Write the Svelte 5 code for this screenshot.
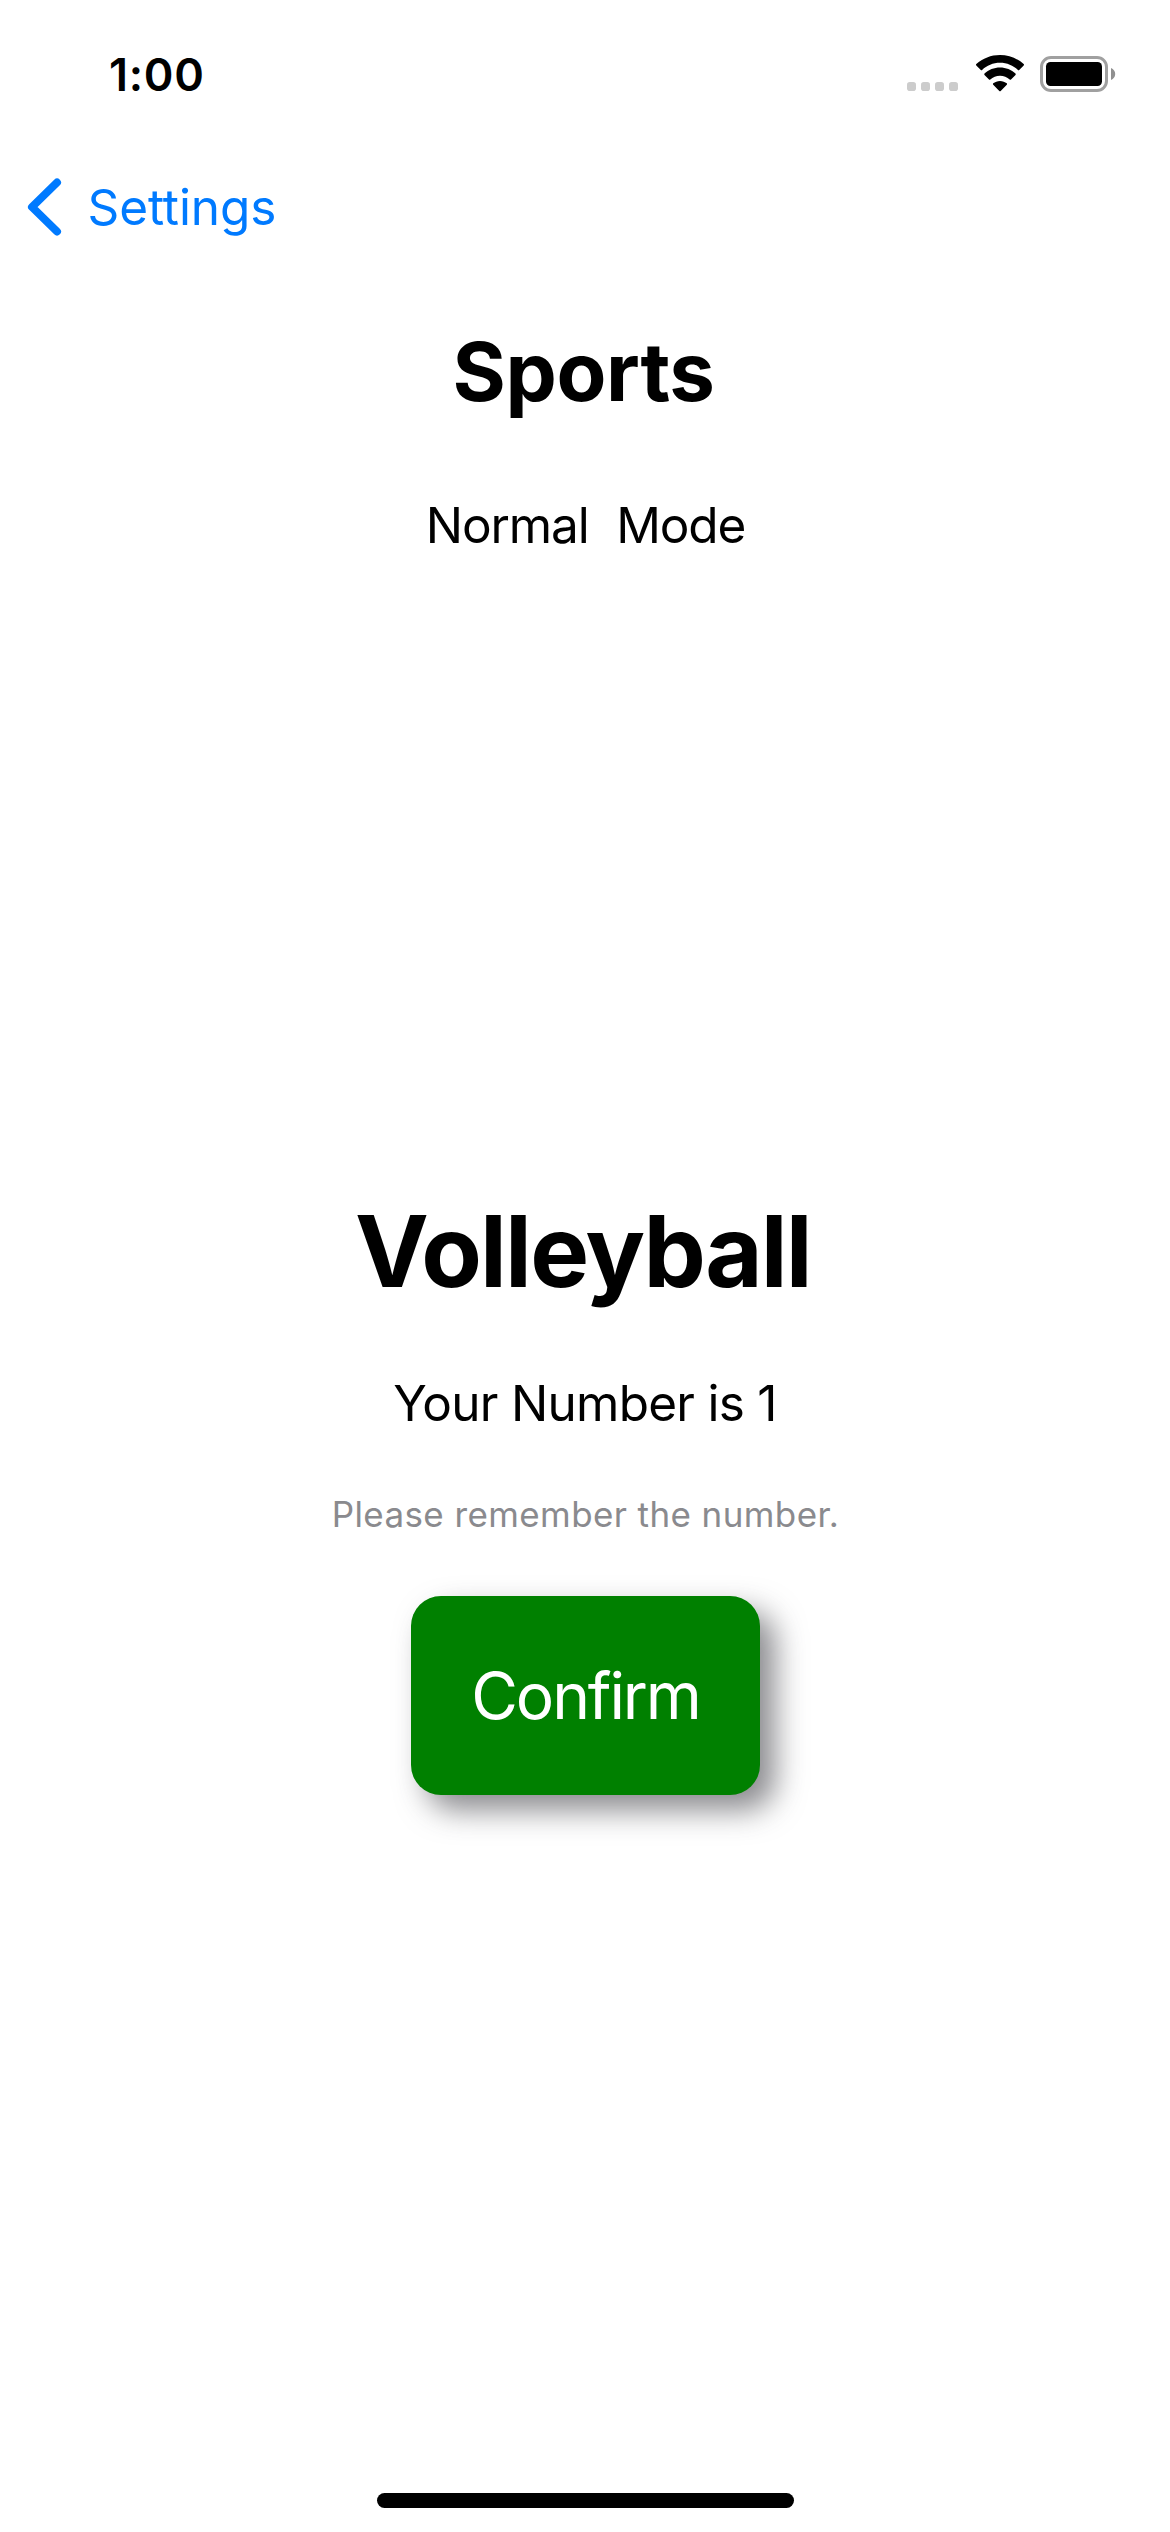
<script>
  const category = 'Sports';
  const mode = 'Normal';
  const team = 'Volleyball';
  const number = 1;
</script>

<div class="screen">
  <header class="status">
    <time>1:00</time>
    <div class="indicators">
      <svg class="cell" viewBox="0 0 51 9" aria-hidden="true">
        {#each [0, 14, 28, 42] as x}
          <rect {x} y="0" width="9" height="9" rx="2.8" />
        {/each}
      </svg>
      <svg class="wifi" viewBox="0 0 50 37" aria-hidden="true">
        <path d="M25 7.800c6.900 0 13.200 2.700 17.900 7.100.4.300.9.300 1.300 0l4.500-4.500c.4-.4.4-1 0-1.400C42.300 3.400 34 0 25 0S7.700 3.400 1.300 9c-.4.400-.4 1 0 1.400l4.500 4.500c.4.300.9.300 1.300 0C11.800 10.500 18.100 7.800 25 7.800z" />
        <path d="M25 20.800c3.700 0 7.100 1.400 9.700 3.700.4.400 1 .3 1.300 0l4.500-4.500c.4-.4.4-1 0-1.400-4.100-3.700-9.600-6-15.500-6s-11.400 2.300-15.500 6c-.4.400-.4 1 0 1.400l4.500 4.500c.3.300.9.400 1.300 0 2.600-2.300 6-3.700 9.700-3.700z" />
        <path d="M31.800 29.700c.4-.4.4-1 0-1.400-1.900-1.500-4.200-2.400-6.800-2.400s-4.900.9-6.800 2.400c-.4.400-.4 1 0 1.400l6.100 6.200c.4.400 1 .4 1.400 0z" />
      </svg>
      <svg class="battery" viewBox="0 0 75 36" aria-hidden="true">
        <rect x="1.500" y="1.500" width="65" height="33" rx="9.500" fill="none" stroke="#a0a0a0" stroke-width="3" />
        <rect x="6" y="6" width="56" height="24" rx="4.500" />
        <path d="M71 12c2.600 1.100 4.200 3.400 4.200 6s-1.600 4.900-4.200 6z" fill="#909090" />
      </svg>
    </div>
  </header>

  <nav>
    <svg class="chevron" viewBox="0 0 36 60" aria-hidden="true">
      <path d="M31 5.500 6 30 31 54.500" />
    </svg>
    <a href="#settings">Settings</a>
  </nav>

  <main>
    <h1>{category}</h1>
    <p class="mode"><span>{mode}</span><span>Mode</span></p>
    <h2>{team}</h2>
    <p class="number">Your Number is {number}</p>
    <p class="hint">Please remember the number.</p>
    <button type="button">Confirm</button>
  </main>

  <footer><div class="home"></div></footer>
</div>

<style>
  :global(body) {
    margin: 0;
    background: #fff;
  }

  .screen {
    box-sizing: border-box;
    width: 1170px;
    height: 2532px;
    display: flex;
    flex-direction: column;
    overflow: hidden;
    background: #fff;
    color: #000;
    font-family: Inter, 'Liberation Sans', sans-serif;
    font-size: 49.5px;
  }

  .status {
    box-sizing: border-box;
    height: 141px;
    padding: 55px 55px 0 109px;
    display: flex;
    justify-content: space-between;
    align-items: flex-start;
  }

  time {
    font-size: 45px;
    font-weight: 600;
    line-height: 40px;
    letter-spacing: 0.7px;
  }

  .indicators {
    display: flex;
    align-items: flex-end;
    height: 37px;
  }

  svg {
    display: block;
    flex: none;
  }

  .cell {
    width: 51px;
    height: 9px;
    margin: 0 17px 1px 0;
    fill: #ccc;
  }

  .wifi {
    width: 50px;
    height: 37px;
    margin-right: 15px;
  }

  .battery {
    width: 75px;
    height: 36px;
    overflow: visible;
  }

  nav {
    height: 132px;
    padding-left: 26px;
    display: flex;
    align-items: center;
  }

  .chevron {
    width: 36px;
    height: 60px;
    margin-right: 25.5px;
    fill: none;
    stroke: #007aff;
    stroke-width: 8;
    stroke-linecap: round;
    stroke-linejoin: round;
  }

  a {
    color: #007aff;
    text-decoration: none;
    line-height: 60px;
    letter-spacing: -0.1px;
  }

  main {
    flex: 1;
    display: flex;
    flex-direction: column;
    align-items: center;
    padding-left: 1px;
  }

  h1,
  h2,
  p {
    margin: 0;
    white-space: nowrap;
  }

  h1 {
    margin-top: 49px;
    padding-right: 4px;
    font-size: 81.5px;
    line-height: 100px;
    letter-spacing: -0.4px;
  }

  .mode {
    display: flex;
    gap: 27.5px;
    margin-top: 73px;
    line-height: 60px;
    letter-spacing: -1.1px;
  }

  h2 {
    margin-top: 636px;
    padding-right: 5px;
    font-size: 99px;
    line-height: 120px;
    letter-spacing: -1.8px;
  }

  .number {
    margin-top: 62px;
    padding-right: 1px;
    line-height: 60px;
    letter-spacing: -0.73px;
  }

  .hint {
    margin-top: 61px;
    font-size: 35px;
    line-height: 40px;
    letter-spacing: 0.4px;
    color: #8a8a8e;
  }

  button {
    width: 349px;
    height: 199px;
    margin-top: 62px;
    padding: 0;
    border: 0;
    border-radius: 30px;
    background: #008000;
    box-shadow: 15px 15px 30px rgba(60, 60, 67, 0.6);
    color: #fff;
    font: 400 64px Inter, 'Liberation Sans', sans-serif;
    letter-spacing: -2.1px;
  }

  footer {
    height: 39px;
    padding-left: 1px;
    display: flex;
    justify-content: center;
    align-items: flex-start;
  }

  .home {
    width: 417px;
    height: 15px;
    border-radius: 8px;
    background: #000;
  }
</style>
